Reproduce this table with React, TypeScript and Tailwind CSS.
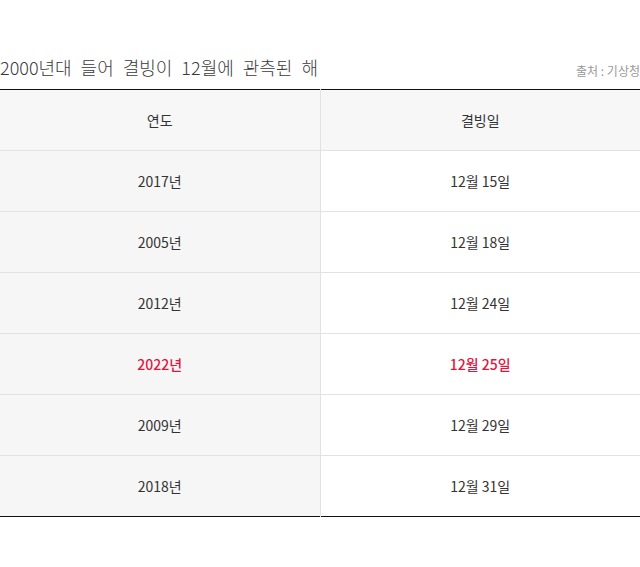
const rows = [
  { year: "2017년", date: "12월 15일" },
  { year: "2005년", date: "12월 18일" },
  { year: "2012년", date: "12월 24일" },
  { year: "2022년", date: "12월 25일", highlight: true },
  { year: "2009년", date: "12월 29일" },
  { year: "2018년", date: "12월 31일" },
];

export default function App() {
  return (
    <div
      className="min-h-[567px] bg-white pt-[54px]"
      style={{ fontFamily: '"Noto Sans CJK KR", "Noto Sans", sans-serif' }}
    >
      <div className="flex h-[27px] items-end justify-between">
        <h2 className="text-[18px] font-light leading-[27px] text-[#3a3a3a] [word-spacing:5px]">
          2000년대 들어 결빙이 12월에 관측된 해
        </h2>
        <span className="mb-[1px] text-[12px] leading-[18px] text-[#999]">출처 : 기상청</span>
      </div>

      <table className="mt-[8px] w-full table-fixed border-collapse border-y border-y-[#111] text-[14px] text-[#333]">
        <thead>
          <tr className="h-[61px] bg-[#f7f7f7]">
            <th className="w-1/2 border-b border-r border-[#e2e2e2] font-normal">연도</th>
            <th className="border-b border-[#e2e2e2] font-normal">결빙일</th>
          </tr>
        </thead>
        <tbody>
          {rows.map((r, i) => (
            <tr key={r.year} className="h-[61px]">
              <td
                className={`border-r border-[#e2e2e2] bg-[#f6f6f6] text-center ${
                  i < rows.length - 1 ? "border-b" : ""
                } ${r.highlight ? "font-medium text-[#e0163f]" : ""}`}
              >
                {r.year}
              </td>
              <td
                className={`border-[#e2e2e2] bg-white text-center ${
                  i < rows.length - 1 ? "border-b" : ""
                } ${r.highlight ? "font-medium text-[#e0163f]" : ""}`}
              >
                {r.date}
              </td>
            </tr>
          ))}
        </tbody>
      </table>
    </div>
  );
}
